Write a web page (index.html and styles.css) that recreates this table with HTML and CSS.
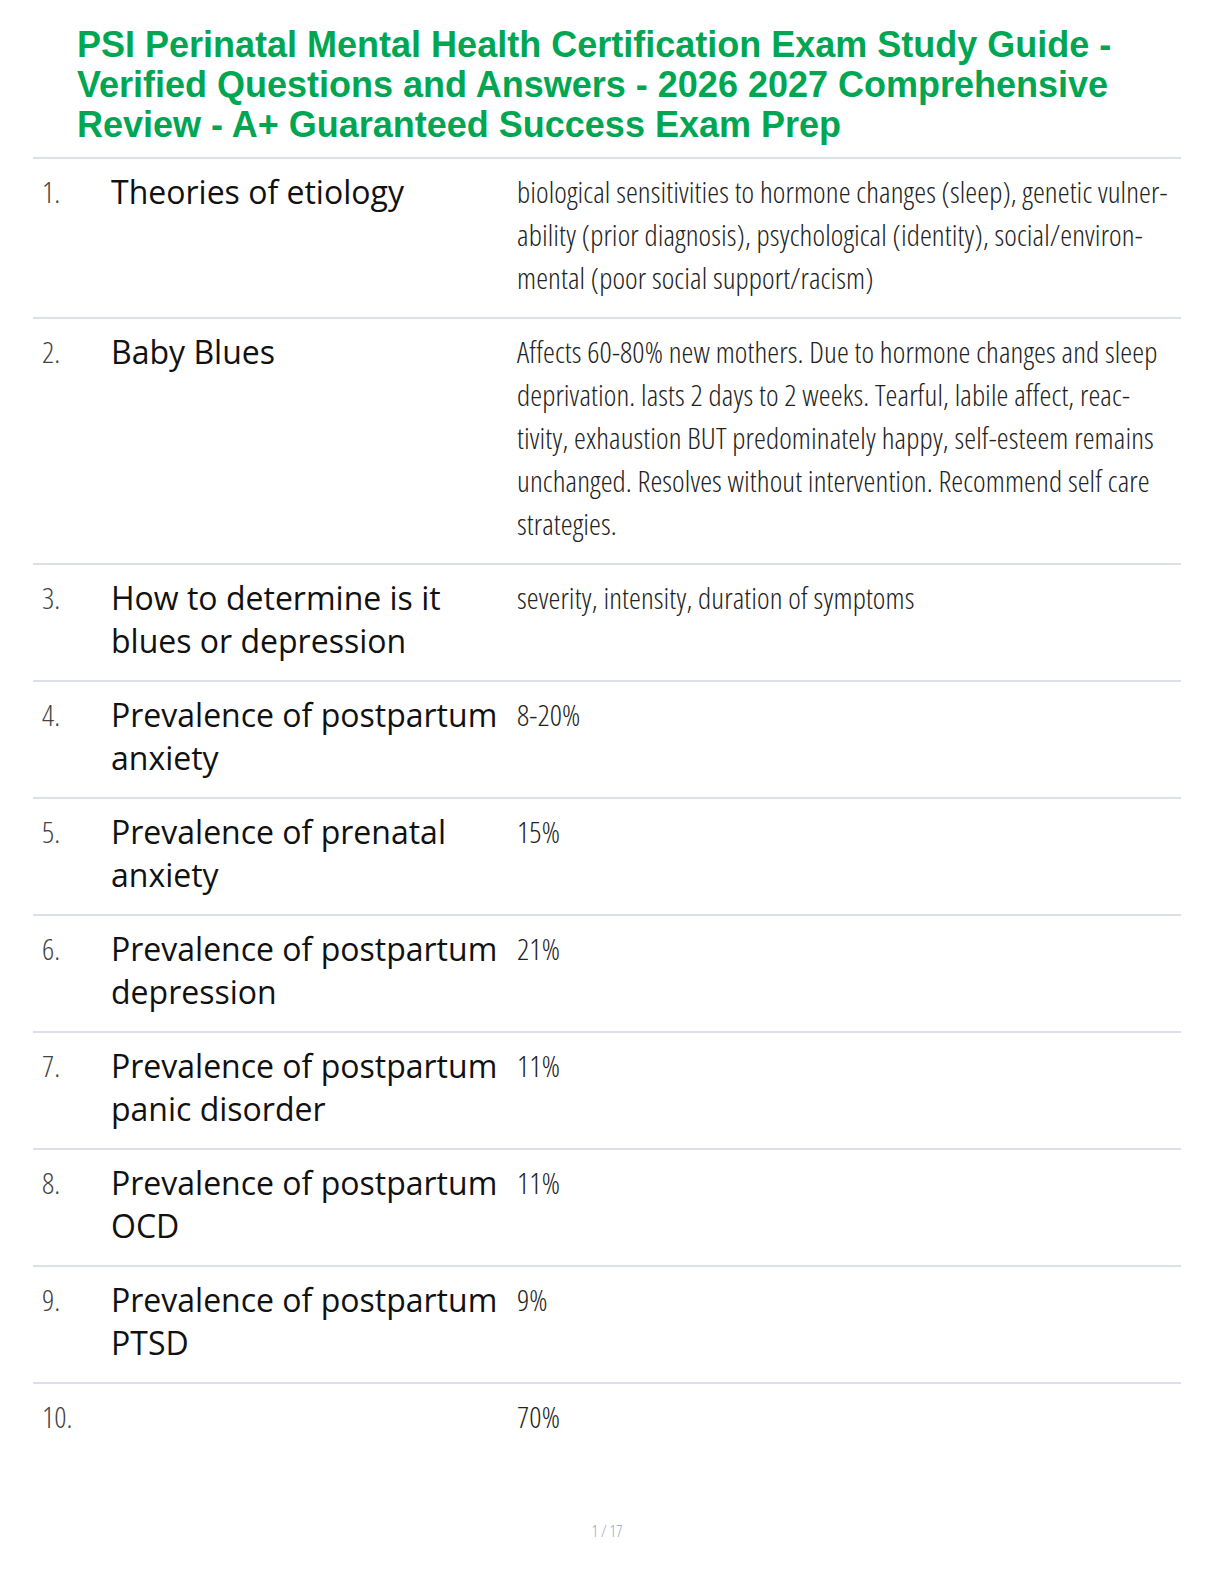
FILE: index.html
```html
<!DOCTYPE html>
<html lang="en">
<head>
<meta charset="utf-8">
<title>PSI Perinatal Mental Health Certification Exam Study Guide</title>
<link rel="stylesheet" href="styles.css">
</head>
<body>
<div class="page">
  <h1 class="title">PSI Perinatal Mental Health Certification Exam Study Guide - Verified Questions and Answers - 2026 2027 Comprehensive Review - A+ Guaranteed Success Exam Prep</h1>
  <div class="cards">
    <div class="row">
      <div class="num">1.</div>
      <div class="q">Theories of etiology</div>
      <div class="a">biological sensitivities to hormone changes (sleep), genetic vulner&shy;ability (prior diagnosis), psychological (identity), social/environ&shy;mental (poor social support/racism)</div>
    </div>
    <div class="row">
      <div class="num">2.</div>
      <div class="q">Baby Blues</div>
      <div class="a">Affects 60-80% new mothers. Due to hormone changes and sleep deprivation. lasts 2 days to 2 weeks. Tearful, labile affect, reac&shy;tivity, exhaustion BUT predominately happy, self-esteem remains unchanged. Resolves without intervention. Recommend self care strategies.</div>
    </div>
    <div class="row">
      <div class="num">3.</div>
      <div class="q">How to determine is it blues or depression</div>
      <div class="a">severity, intensity, duration of symptoms</div>
    </div>
    <div class="row">
      <div class="num">4.</div>
      <div class="q">Prevalence of postpartum anxiety</div>
      <div class="a">8-20%</div>
    </div>
    <div class="row">
      <div class="num">5.</div>
      <div class="q">Prevalence of prenatal anxiety</div>
      <div class="a">15%</div>
    </div>
    <div class="row">
      <div class="num">6.</div>
      <div class="q">Prevalence of postpartum depression</div>
      <div class="a">21%</div>
    </div>
    <div class="row">
      <div class="num">7.</div>
      <div class="q">Prevalence of postpartum panic disorder</div>
      <div class="a">11%</div>
    </div>
    <div class="row">
      <div class="num">8.</div>
      <div class="q">Prevalence of postpartum OCD</div>
      <div class="a">11%</div>
    </div>
    <div class="row">
      <div class="num">9.</div>
      <div class="q">Prevalence of postpartum PTSD</div>
      <div class="a">9%</div>
    </div>
    <div class="row last">
      <div class="num">10.</div>
      <div class="q"></div>
      <div class="a">70%</div>
    </div>
  </div>
  <div class="footer">1 / 17</div>
</div>
</body>
</html>
```
FILE: styles.css
```css
html, body {
  margin: 0;
  padding: 0;
  background: #ffffff;
}
.page {
  width: 1148px;
  padding: 25px 0 0 33px;
}
.title {
  margin: 0 0 12px 44px;
  font-family: "Liberation Sans", Arial, sans-serif;
  font-weight: bold;
  font-size: 36px;
  line-height: 40px;
  color: #00a651;
}
.cards {
  border-top: 2px solid #dde0e8;
}
.row {
  display: grid;
  grid-template-columns: 69px 403px 1fr;
  padding: 11px 0 18px 9px;
  border-bottom: 2px solid #dde0e8;
}
.row.last {
  border-bottom: none;
}
.num {
  font-family: "Open Sans", sans-serif;
  font-weight: 300;
  font-stretch: 75%;
  font-size: 30px;
  line-height: 43px;
  color: #444;
}
.q {
  font-family: "Open Sans", sans-serif;
  font-size: 32px;
  line-height: 43px;
  color: #111;
}
.a {
  font-family: "Open Sans", sans-serif;
  font-weight: 300;
  font-stretch: 75%;
  font-size: 30px;
  line-height: 43px;
  letter-spacing: 0.1px;
  color: #222;
  hyphens: manual;
  padding: 0 10px 0 3px;
}
.footer {
  margin-top: 64px;
  text-align: center;
  font-family: "Open Sans", sans-serif;
  font-weight: 300;
  font-stretch: 75%;
  font-size: 16px;
  color: #8fa6c8;
}
```
